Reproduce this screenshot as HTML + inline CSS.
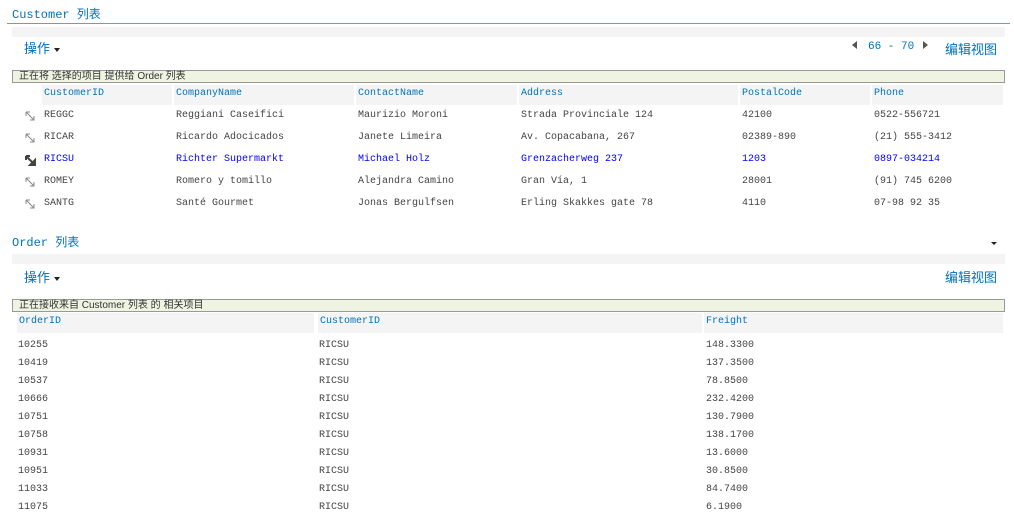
<!DOCTYPE html>
<html><head><meta charset="utf-8"><style>
body{margin:0;width:1014px;height:523px;background:#fff;position:relative;overflow:hidden;font-family:"Liberation Mono","Noto Sans CJK SC",monospace;font-size:10px;color:#444}
.a{position:absolute;white-space:nowrap}
.t{font-size:12px;color:#0072bc}
.b{color:#0072bc;font-family:"Liberation Sans","Noto Sans CJK SC",sans-serif;font-size:13px}
.hd{position:absolute;background:#f4f4f4;height:20px;line-height:18px;color:#0072bc;padding-left:2px;box-sizing:border-box}
.msg{position:absolute;left:12px;width:993px;height:13px;background:#eef4e1;border:1px solid #999;box-sizing:border-box;font-family:"Liberation Sans","Noto Sans CJK SC",sans-serif;font-size:10px;line-height:11px;padding-left:6px;color:#333}
.bar{position:absolute;left:12px;width:993px;height:10px;background:#f4f4f4}
.sel{color:#00f}
.ic{position:absolute;width:11px;height:11px}
.tri{display:inline-block;border-left:3px solid transparent;border-right:3px solid transparent;border-top:4px solid #222;vertical-align:middle;margin-left:4px}
</style></head><body>
<div class="a t" style="left:12px;top:5px">Customer 列表</div>
<div class="a" style="left:7px;top:23px;width:1003px;height:1px;background:#4aa8e8"></div>
<div class="bar" style="top:27px"></div>
<div class="a b" style="left:24px;top:38px">操作<span class="tri"></span></div>
<div class="a" style="left:852px;top:41px;border-top:4px solid transparent;border-bottom:4px solid transparent;border-right:5px solid #555"></div>
<div class="a t" style="left:868px;top:41px;font-size:11px">66 - 70</div>
<div class="a" style="left:923px;top:41px;border-top:4px solid transparent;border-bottom:4px solid transparent;border-left:5px solid #555"></div>
<div class="a b" style="left:945px;top:39px">编辑视图</div>
<div class="msg" style="top:70px">正在将 选择的项目 提供给 Order 列表</div>
<div class="hd" style="left:42px;top:85px;width:130px">CustomerID</div>
<div class="hd" style="left:174px;top:85px;width:180px">CompanyName</div>
<div class="hd" style="left:356px;top:85px;width:161px">ContactName</div>
<div class="hd" style="left:519px;top:85px;width:219px">Address</div>
<div class="hd" style="left:740px;top:85px;width:130px">PostalCode</div>
<div class="hd" style="left:872px;top:85px;width:131px">Phone</div>
<div style="position:absolute;left:0;top:110px">
<div class="a" style="top:0"><svg class="ic" style="left:25px;top:1px" viewBox="0 0 11 11"><path d="M1 1h4M1 1v4M1 1l8 8M9 5v4H5" stroke="#888" fill="none"/></svg><span class="a" style="left:44px">REGGC</span><span class="a" style="left:176px">Reggiani Caseifici</span><span class="a" style="left:358px">Maurizio Moroni</span><span class="a" style="left:521px">Strada Provinciale 124</span><span class="a" style="left:742px">42100</span><span class="a" style="left:874px">0522-556721</span></div>
<div class="a" style="top:22px"><svg class="ic" style="left:25px;top:1px" viewBox="0 0 11 11"><path d="M1 1h4M1 1v4M1 1l8 8M9 5v4H5" stroke="#888" fill="none"/></svg><span class="a" style="left:44px">RICAR</span><span class="a" style="left:176px">Ricardo Adocicados</span><span class="a" style="left:358px">Janete Limeira</span><span class="a" style="left:521px">Av. Copacabana, 267</span><span class="a" style="left:742px">02389-890</span><span class="a" style="left:874px">(21) 555-3412</span></div>
<div class="a sel" style="top:44px"><svg class="ic" style="left:25px;top:1px" viewBox="0 0 11 11"><path d="M1 1h4M1 1v4M1 1l8 8M10 5v5H5z" stroke="#444" stroke-width="2" fill="#444"/></svg><span class="a" style="left:44px">RICSU</span><span class="a" style="left:176px">Richter Supermarkt</span><span class="a" style="left:358px">Michael Holz</span><span class="a" style="left:521px">Grenzacherweg 237</span><span class="a" style="left:742px">1203</span><span class="a" style="left:874px">0897-034214</span></div>
<div class="a" style="top:66px"><svg class="ic" style="left:25px;top:1px" viewBox="0 0 11 11"><path d="M1 1h4M1 1v4M1 1l8 8M9 5v4H5" stroke="#888" fill="none"/></svg><span class="a" style="left:44px">ROMEY</span><span class="a" style="left:176px">Romero y tomillo</span><span class="a" style="left:358px">Alejandra Camino</span><span class="a" style="left:521px">Gran Vía, 1</span><span class="a" style="left:742px">28001</span><span class="a" style="left:874px">(91) 745 6200</span></div>
<div class="a" style="top:88px"><svg class="ic" style="left:25px;top:1px" viewBox="0 0 11 11"><path d="M1 1h4M1 1v4M1 1l8 8M9 5v4H5" stroke="#888" fill="none"/></svg><span class="a" style="left:44px">SANTG</span><span class="a" style="left:176px">Santé Gourmet</span><span class="a" style="left:358px">Jonas Bergulfsen</span><span class="a" style="left:521px">Erling Skakkes gate 78</span><span class="a" style="left:742px">4110</span><span class="a" style="left:874px">07-98 92 35</span></div>
</div>
<div class="a t" style="left:12px;top:233px">Order 列表</div>
<div class="a" style="left:991px;top:242px;border-left:3px solid transparent;border-right:3px solid transparent;border-top:3px solid #222"></div>
<div class="bar" style="top:254px"></div>
<div class="a b" style="left:24px;top:267px">操作<span class="tri"></span></div>
<div class="a b" style="left:945px;top:267px">编辑视图</div>
<div class="msg" style="top:299px">正在接收来自 Customer 列表 的 相关项目</div>
<div class="hd" style="left:17px;top:313px;width:297px">OrderID</div>
<div class="hd" style="left:318px;top:313px;width:384px">CustomerID</div>
<div class="hd" style="left:704px;top:313px;width:299px">Freight</div>
<div style="position:absolute;left:0;top:337px;line-height:18px">
<div class="a" style="left:18px">10255<br>10419<br>10537<br>10666<br>10751<br>10758<br>10931<br>10951<br>11033<br>11075</div>
<div class="a" style="left:319px">RICSU<br>RICSU<br>RICSU<br>RICSU<br>RICSU<br>RICSU<br>RICSU<br>RICSU<br>RICSU<br>RICSU</div>
<div class="a" style="left:706px">148.3300<br>137.3500<br>78.8500<br>232.4200<br>130.7900<br>138.1700<br>13.6000<br>30.8500<br>84.7400<br>6.1900</div>
</div>
</body></html>
